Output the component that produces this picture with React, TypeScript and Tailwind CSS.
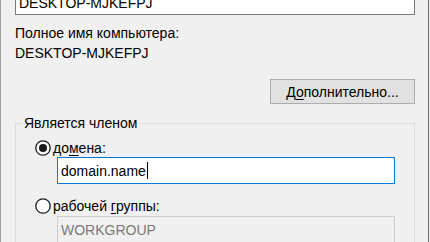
import React from "react";

function Radio({ checked }: { checked?: boolean }) {
  return (
    <svg width="16" height="16" viewBox="0 0 16 16" className="shrink-0">
      <circle cx="8" cy="8" r="7.2" fill="#ffffff" stroke="#1a1a1a" strokeWidth="1.3" />
      {checked && <circle cx="8" cy="8" r="4" fill="#1a1a1a" />}
    </svg>
  );
}

export default function App() {
  return (
    <div
      className="flex w-[430px] h-[242px] overflow-hidden bg-[#f0f0f0] text-[14px] text-black"
      style={{ fontFamily: '"Liberation Sans", Arial, sans-serif' }}
    >
      <div className="flex flex-col w-[428px] border-l border-[#a0a0a0] pl-[14px]">
        {/* computer name box (scrolled off top) */}
        <div className="-mt-[9px] w-[400px] h-[24px] shrink-0 border border-[#7a7a7a] bg-white flex items-center px-[3px] leading-[16px]">
          DESKTOP-MJKEFPJ
        </div>

        <div className="mt-[8px] leading-[20px]">Полное имя компьютера:</div>
        <div className="leading-[20px]">DESKTOP-MJKEFPJ</div>

        <div className="mt-[16px] w-[400px] flex justify-end">
          <button className="w-[145px] h-[25px] bg-[#e1e1e1] border border-[#adadad] leading-[16px] text-center">
            Д<span className="underline underline-offset-2">о</span>полнительно...
          </button>
        </div>

        {/* membership group */}
        <fieldset className="mt-[11px] w-[400px] border border-[#dcdcdc] px-0 pb-[20px]">
          <legend className="ml-[6px] px-[2px] leading-[16px]">Является членом</legend>

          <div className="mt-[9px] ml-[19px] h-[15px] flex items-center gap-[2px] leading-[16px]">
            <Radio checked />
            <span>
              до<span className="underline underline-offset-2">м</span>ена:
            </span>
          </div>
          <div className="mt-[2px] ml-[41px] w-[338px] h-[27px] border border-[#0078d7] bg-white flex items-center px-[3px] leading-[16px]">
            domain.name
            <span className="inline-block w-px h-[17px] bg-black ml-px" />
          </div>

          <div className="mt-[14px] ml-[19px] h-[15px] flex items-center gap-[2px] leading-[16px]">
            <Radio />
            <span>
              рабочей <span className="underline underline-offset-2">г</span>руппы:
            </span>
          </div>
          <div className="mt-[3px] ml-[41px] w-[338px] h-[27px] border border-[#cccccc] bg-[#f0f0f0] flex items-center px-[3px] leading-[16px] text-[#7a7a7a]">
            WORKGROUP
          </div>
        </fieldset>
      </div>
      <div className="w-px h-full bg-[#6b6b6b]" />
      <div className="w-px h-full bg-[#f0f0f0]" />
    </div>
  );
}
